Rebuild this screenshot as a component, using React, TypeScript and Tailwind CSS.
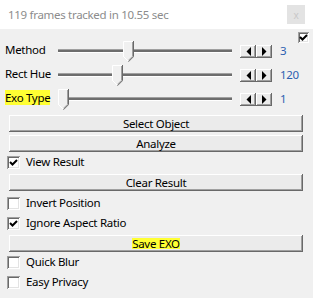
import React from "react"

const raised =
  "bg-[#ebebeb] shadow-[inset_-1px_-1px_0_#696969,inset_1px_1px_0_#ffffff,inset_-2px_-2px_0_#a0a0a0]"

function CheckMark() {
  return (
    <svg width="9" height="9" viewBox="0 0 9 9" className="block">
      <path d="M1 4 L3.5 6.5 L8 2" fill="none" stroke="#000" strokeWidth="2" />
    </svg>
  )
}

function Checkbox({ checked, size = 13 }: { checked?: boolean; size?: number }) {
  return (
    <div
      className="flex items-center justify-center bg-white shadow-[inset_1px_1px_0_#a0a0a0,inset_-1px_-1px_0_#ffffff,inset_2px_2px_0_#696969,inset_-2px_-2px_0_#e3e3e3]"
      style={{ width: size, height: size }}
    >
      {checked && <CheckMark />}
    </div>
  )
}

function Thumb({ left }: { left: number }) {
  return (
    <svg
      width="11"
      height="21"
      viewBox="0 0 11 21"
      className="absolute top-[-9px]"
      style={{ left }}
    >
      <path d="M0 0 H11 V15.5 L5.5 21 L0 15.5 Z" fill="#f0f0f0" />
      <path d="M0.5 16 V0.5 H10" fill="none" stroke="#ffffff" />
      <path d="M10.5 0 V15.7 L5.5 20.7" fill="none" stroke="#696969" />
      <path d="M9.5 1 V15.3 L5.5 19.3" fill="none" stroke="#a0a0a0" />
      <path d="M0.5 15.5 L5 20" fill="none" stroke="#ffffff" />
    </svg>
  )
}

function Arrow({ dir }: { dir: "left" | "right" }) {
  return (
    <svg width="5" height="9" viewBox="0 0 5 9" className="block">
      {dir === "left" ? (
        <path d="M5 0 V9 L0.5 4.5 Z" fill="#000" />
      ) : (
        <path d="M0 0 V9 L4.5 4.5 Z" fill="#000" />
      )}
    </svg>
  )
}

function SliderRow({
  label,
  value,
  thumb,
  highlight,
}: {
  label: string
  value: string
  thumb: number
  highlight?: boolean
}) {
  return (
    <div className="flex h-[24px] items-center">
      <div className="w-[58px] pl-[5px]">
        <span className={highlight ? "bg-[#ffff33]" : ""}>{label}</span>
      </div>
      <div className="relative h-[3px] w-[174px] border-t border-[#a0a0a0] bg-[#6d6d6d] shadow-[0_1px_0_#ffffff]">
        <Thumb left={thumb} />
      </div>
      <div className="ml-[8px] mt-[3px] flex h-[13px]">
        <div className={`flex w-[16px] items-center justify-center ${raised}`}>
          <Arrow dir="left" />
        </div>
        <div className={`flex w-[16px] items-center justify-center ${raised}`}>
          <Arrow dir="right" />
        </div>
      </div>
      <span className="ml-[8px] mt-[2px] text-[#2c5fb0]">{value}</span>
    </div>
  )
}

function Button({ children }: { children: React.ReactNode }) {
  return (
    <div className={`mx-[9px] flex h-[17px] w-[294px] items-center justify-center ${raised}`}>
      {children}
    </div>
  )
}

function CheckRow({ label, checked }: { label: string; checked?: boolean }) {
  return (
    <div className="flex h-[20px] items-center pl-[7px]">
      <Checkbox checked={checked} />
      <span className="ml-[6px]">{label}</span>
    </div>
  )
}

export default function App() {
  return (
    <div className="h-[298px] w-[313px] overflow-hidden bg-[#f0f0f0] font-['Noto_Sans',sans-serif] text-[11.5px] leading-none tracking-[-0.3px] text-black">
      <div className="flex h-[29px] items-center justify-between bg-white pl-[8px] pr-[8px]">
        <span className="text-[#8c8c8c]">119 frames tracked in 10.55 sec</span>
        <div className="flex h-[19px] w-[18px] items-center justify-center bg-[#e3e3e3] text-[10px] text-[#c8c8c8]">
          x
        </div>
      </div>

      <div className="flex h-[9px] justify-end pr-[4px] pt-[3px]">
        <Checkbox checked size={11} />
      </div>

      <SliderRow label="Method" value="3" thumb={65} />
      <SliderRow label="Rect Hue" value="120" thumb={54} />
      <SliderRow label="Exo Type" value="1" thumb={0} highlight />

      <div className="mt-[5px] flex flex-col gap-[3px]">
        <Button>Select Object</Button>
        <Button>Analyze</Button>
      </div>
      <CheckRow label="View Result" checked />
      <div className="mt-[2px]">
        <Button>Clear Result</Button>
      </div>
      <div className="mt-[2px]">
        <CheckRow label="Invert Position" />
        <CheckRow label="Ignore Aspect Ratio" checked />
      </div>
      <div className="mt-[2px]">
        <Button>
          <span className="bg-[#ffff33]">Save EXO</span>
        </Button>
      </div>
      <CheckRow label="Quick Blur" />
      <CheckRow label="Easy Privacy" />
    </div>
  )
}
